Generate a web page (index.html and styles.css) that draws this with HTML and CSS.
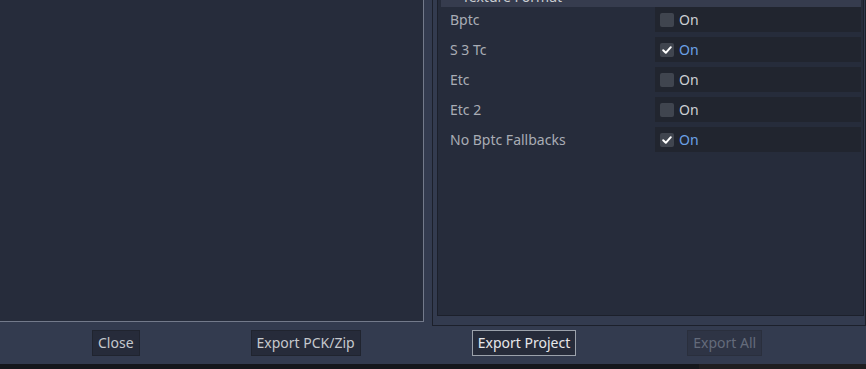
FILE: index.html
```html
<!DOCTYPE html>
<html lang="en">
<head>
  <meta charset="UTF-8" />
  <title>Export</title>
  <link rel="stylesheet" href="styles.css">
</head>
<body>
  <div class="dialog">
    <div class="main">
      <div class="presets"></div>
      <div class="options">
        <div class="inspector">
          <div class="section"><span>Texture Format</span></div>
          <div class="props">
            <div class="prop">
              <div class="label">Bptc</div>
              <div class="value"><span class="check"></span><span class="on">On</span></div>
            </div>
            <div class="prop">
              <div class="label">S 3 Tc</div>
              <div class="value checked"><span class="check"><svg width="14" height="14" viewBox="0 0 14 14"><path d="M3.2 7.3 L5.8 9.8 L10.8 4.2" fill="none" stroke="#fff" stroke-width="2" stroke-linecap="round" stroke-linejoin="round"/></svg></span><span class="on">On</span></div>
            </div>
            <div class="prop">
              <div class="label">Etc</div>
              <div class="value"><span class="check"></span><span class="on">On</span></div>
            </div>
            <div class="prop">
              <div class="label">Etc 2</div>
              <div class="value"><span class="check"></span><span class="on">On</span></div>
            </div>
            <div class="prop">
              <div class="label">No Bptc Fallbacks</div>
              <div class="value checked"><span class="check"><svg width="14" height="14" viewBox="0 0 14 14"><path d="M3.2 7.3 L5.8 9.8 L10.8 4.2" fill="none" stroke="#fff" stroke-width="2" stroke-linecap="round" stroke-linejoin="round"/></svg></span><span class="on">On</span></div>
            </div>
          </div>
        </div>
      </div>
    </div>
    <div class="buttons">
      <button class="btn">Close</button>
      <button class="btn">Export PCK/Zip</button>
      <button class="btn focus">Export Project</button>
      <button class="btn disabled">Export All</button>
    </div>
  </div>
  <div class="below">
    <div class="below-left"></div>
    <div class="below-right"></div>
  </div>
</body>
</html>
```

FILE: styles.css
```css
body {
  margin: 0;
  width: 866px;
  height: 369px;
  overflow: hidden;
  background: #333b4f;
  font-family: "Noto Sans", "Open Sans", sans-serif;
  font-size: 14px;
}
.dialog {
  height: 364px;
  display: flex;
  flex-direction: column;
  background: #333b4f;
}
.main {
  display: flex;
  height: 322px;
}
.presets {
  width: 423px;
  height: 321px;
  background: #262c3b;
  border-right: 1px solid #737a8b;
  border-bottom: 1px solid #737a8b;
}
.options {
  margin-left: 8px;
  width: 427px;
  height: 321px;
  border-left: 1px solid #1c202b;
  border-right: 1px solid #1c202b;
  border-bottom: 1px solid #1c202b;
  padding: 0 1px 4px 4px;
}
.inspector {
  height: 316px;
  background: #262c3b;
  border-left: 1px solid #1c202b;
  border-right: 1px solid #1c202b;
  border-bottom: 1px solid #1c202b;
  box-sizing: border-box;
  padding: 0 2px 0 3px;
}
.section {
  height: 7px;
  background: #363c4e;
  color: #c9ccd1;
  padding-left: 21px;
  overflow: hidden;
}
.section span {
  display: block;
  line-height: 16px;
  margin-top: -11px;
}
.props {
  display: flex;
  flex-direction: column;
  gap: 5px;
}
.prop {
  display: grid;
  grid-template-columns: 214px 1fr;
  height: 25px;
}
.label {
  color: #a9adb5;
  padding-left: 9px;
  line-height: 25px;
}
.value {
  background: #21252f;
  display: flex;
  align-items: center;
  padding-left: 5px;
  gap: 5px;
}
.check {
  width: 14px;
  height: 14px;
  border-radius: 2px;
  background: #40454f;
  display: flex;
}
.on {
  color: #cdd0d4;
  line-height: 25px;
}
.checked .on {
  color: #6ba1e7;
}
.buttons {
  flex: 1;
  display: flex;
  align-items: center;
  gap: 111px;
  padding-left: 92px;
  padding-bottom: 1px;
}
.btn {
  font-family: "Noto Sans", "Open Sans", sans-serif;
  font-size: 14px;
  height: 26px;
  padding: 0 5px;
  margin: 0;
  background: #262b3a;
  color: #c5c8cd;
  border: 1px solid #20242f;
  border-radius: 0;
}
.btn.focus {
  border-color: #9ba1ab;
  color: #e6e7ea;
}
.btn.disabled {
  background: #2e3445;
  color: #646b7b;
  border-color: #2a2f3d;
}
.below {
  display: flex;
  height: 5px;
}
.below-left {
  width: 699px;
  background: #15171c;
}
.below-right {
  flex: 1;
  background: #1f1e20;
}
```
